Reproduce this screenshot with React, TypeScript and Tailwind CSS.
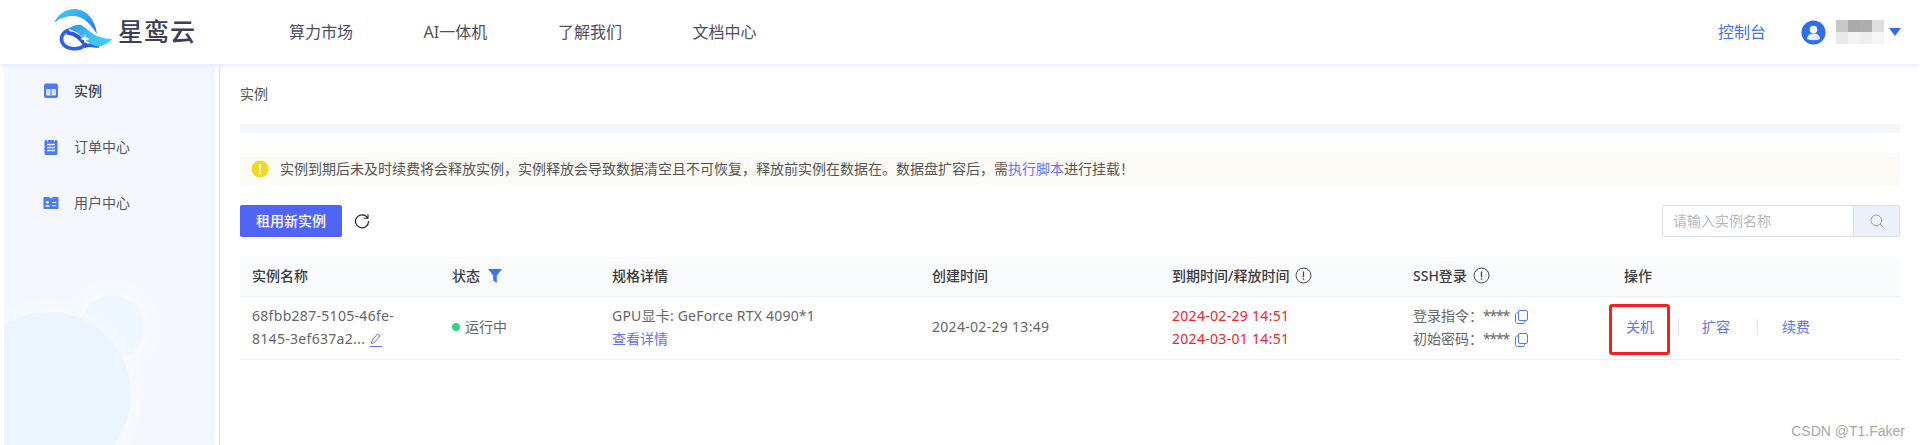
import { Fragment } from "react"
import { Search } from "lucide-react"

const navItems = ["算力市场", "AI一体机", "了解我们", "文档中心"]

function Logo() {
  return (
    <svg width="62" height="50" viewBox="0 0 62 50" className="mb-[2px] mr-[6px] shrink-0">
      <defs>
        <linearGradient id="top" x1="0" y1="0" x2="1" y2="1">
          <stop offset="0" stopColor="#3fd0f8" />
          <stop offset="0.6" stopColor="#2f9df2" />
          <stop offset="1" stopColor="#2468ea" />
        </linearGradient>
        <linearGradient id="wave" x1="0" y1="0" x2="1" y2="0.4">
          <stop offset="0" stopColor="#2f8cf2" />
          <stop offset="0.5" stopColor="#3fb8f6" />
          <stop offset="1" stopColor="#3ccdf7" />
        </linearGradient>
      </defs>
      <path d="M4 17C8 8 16 3 24 3C36 3 45 13 47 28C43 22 40 18 36 15C30 9 16 7 4 17Z" fill="url(#top)" />
      <path d="M19 24C13 26 10 31 12 36C15 43 27 45 34 40C38 38 42 40 49 40" fill="none" stroke="#2c60ee" strokeWidth="3.500" />
      <path d="M17 27C25 26 31 32 37 41" fill="none" stroke="#2a50e6" strokeWidth="4" />
      <path d="M18 23C22 20 27 18 31 19C36 21 40 27 47 30C52 32 57 33 62 33C58 38 52 41 46 40C41 39 37 35 33 32C29 27 23 24 18 23Z" fill="url(#wave)" />
      <path d="M35 28L36.200 31.500L40 33L36.200 34L35 38L33.800 34L30 33L33.800 31.500Z" fill="#ffffff" />
    </svg>
  )
}

function SideIcon({ kind }: { kind: string }) {
  if (kind === "instance") {
    return (
      <svg width="16" height="16" viewBox="0 0 16 16">
        <rect x="1" y="0.500" width="14" height="14.500" rx="2" fill="#4b7bf5" />
        <rect x="3" y="6" width="10" height="6.500" rx="1" fill="#d5e1fe" />
        <path d="M8 6V12.500" stroke="#4b7bf5" />
      </svg>
    )
  }
  if (kind === "order") {
    return (
      <svg width="16" height="16" viewBox="0 0 16 16">
        <rect x="1.500" y="1" width="13" height="15" rx="1.500" fill="#4b7bf5" />
        <path d="M4.500 0V2.500M11.500 0V2.500" stroke="#ffffff" />
        <path d="M4 5.500H12M4 8.500H12M4 11.500H12" stroke="#e4ebff" strokeWidth="1.300" />
      </svg>
    )
  }
  return (
    <svg width="17" height="14" viewBox="0 0 17 14">
      <path d="M0.500 1.500C0.500 0.900 1 0.500 1.500 0.500H6.500L7.500 2H9.500L10.500 0.500H15.500C16 0.500 16.500 0.900 16.500 1.500V12.500C16.500 13.100 16 13.500 15.500 13.500H1.500C1 13.500 0.500 13.100 0.500 12.500Z" fill="#4b7bf5" />
      <circle cx="4.800" cy="6.300" r="1.500" fill="#ffffff" />
      <path d="M2.300 11C2.500 9 7 9 7.300 11Z" fill="#ffffff" />
      <path d="M9.500 6.500H14M9.500 9.800H14" stroke="#ffffff" />
    </svg>
  )
}

function Info() {
  return (
    <svg width="17" height="17" viewBox="0 0 17 17" fill="none" stroke="#444" className="ml-[6px]">
      <circle cx="8.500" cy="8.500" r="7.500" />
      <path d="M8.500 4.500V10M8.500 11.300V12.800" strokeWidth="1.300" />
    </svg>
  )
}

function Copy() {
  return (
    <svg width="13" height="14" viewBox="0 0 13 14" fill="none" stroke="#4b7bf5" className="ml-[6px] inline-block">
      <rect x="3.500" y="0.500" width="9" height="10" rx="1.500" />
      <path d="M3.500 3H2C1.200 3 0.500 3.700 0.500 4.500V11.500C0.500 12.600 1.400 13.500 2.500 13.500H8C9 13.500 9.500 12.800 9.500 10.500" />
    </svg>
  )
}

function Divider() {
  return <span className="h-[16px] w-px bg-[#dfe2ea]" />
}

export default function App() {
  return (
    <div className="flex h-[445px] flex-col overflow-hidden bg-white font-['Noto_Sans','Noto_Sans_CJK_SC',sans-serif] text-sm">
      <header className="relative z-10 flex h-16 shrink-0 items-center bg-white pl-[50px] pr-[19px] shadow-[0_2px_5px_#e6e9fc]">
        <Logo />
        <span className="w-[171px] text-[25px] font-medium tracking-[1px] text-[#3b3e56]">星鸾云</span>
        <nav className="flex text-base text-[#4d4f5c]">
          {navItems.map((item) => (
            <a key={item} className="w-[134.500px]">
              {item}
            </a>
          ))}
        </nav>
        <a className="ml-auto text-base text-[#3a74f2]">控制台</a>
        <svg width="25" height="25" viewBox="0 0 25 25" className="ml-[35px]">
          <circle cx="12.500" cy="12.500" r="12" fill="#2e6ff2" />
          <circle cx="12.500" cy="9.500" r="3.800" fill="#ffffff" />
          <path d="M5.800 19C6.500 14.500 9.500 13.500 12.500 13.500C15.500 13.500 18.500 14.500 19.200 19C15 20.800 10 20.800 5.800 19Z" fill="#e4ecfd" />
        </svg>
        <div className="ml-[10px] grid grid-cols-[repeat(4,12px)] grid-rows-[repeat(2,12px)]">
          <span className="bg-[#c9c8c8]" />
          <span className="bg-[#aaaaaa]" />
          <span className="bg-[#aeaeae]" />
          <span className="bg-[#dedede]" />
          <span className="bg-[#e9e9e9]" />
          <span className="bg-[#f3f3f3]" />
          <span className="bg-[#eeeeee]" />
          <span className="bg-[#f6f6f6]" />
        </div>
        <svg width="12" height="8" viewBox="0 0 12 8" className="ml-[5px]">
          <path d="M0 0H12L6 8Z" fill="#2e6ff2" />
        </svg>
      </header>

      <div className="flex flex-1">
        <div className="flex w-[220px] shrink-0 border-r border-[#dcdde0] pl-1 pr-[3px]">
          <aside className="relative w-[208px] overflow-hidden bg-[#f4f8fe] shadow-[2px_0_3px_#e9effb]">
            <div className="absolute left-[76px] top-[232px] h-[64px] w-[64px] rounded-full bg-[#eef6fe] shadow-[0_0_30px_#fafcff]" />
            <div className="absolute left-[-37px] top-[248px] h-[164px] w-[164px] rounded-full bg-[#ecf5fe] shadow-[0_0_20px_#f9fbff]" />
            <div className="relative">
              {[
                ["instance", "实例"],
                ["order", "订单中心"],
                ["user", "用户中心"],
              ].map(([kind, label], i) => (
                <div key={kind} className="flex h-14 items-center pb-[2px]">
                  <span className="ml-[39px] flex w-[16px] justify-center">
                    <SideIcon kind={kind} />
                  </span>
                  <span className={i === 0 ? "ml-[15px] font-medium text-[#40424f]" : "ml-[15px] text-[#55575f]"}>{label}</span>
                </div>
              ))}
            </div>
          </aside>
        </div>

        <main className="min-w-0 flex-1 px-5 pt-5 text-[#666]">
          <div className="h-5 text-[#555]">实例</div>
          <div className="mt-5 h-[9px] bg-[#f4f6fb]" />

          <div className="mt-5 flex h-8 items-center bg-[#fcfaf4] pl-[11px] text-[#555]">
            <svg width="18" height="18" viewBox="0 0 18 18" className="mr-[11px] shrink-0">
              <circle cx="9" cy="9" r="8.500" fill="#eedb20" />
              <path d="M9 4V10.500M9 12.300V14" stroke="#ffffff" strokeWidth="2" />
            </svg>
            {"实例到期后未及时续费将会释放实例\uFF0C实例释放会导致数据清空且不可恢复\uFF0C释放前实例在数据在。数据盘扩容后\uFF0C需"}
            <a className="text-[#5d74f5]">执行脚本</a>
            {"进行挂载\uFF01"}
          </div>

          <div className="mt-5 flex h-8 items-center">
            <button className="h-8 w-[102px] rounded-[2px] bg-[#5064f5] font-medium text-white">租用新实例</button>
            <svg width="16" height="16" viewBox="0 0 16 16" fill="none" stroke="#222" strokeWidth="1.200" className="ml-3">
              <path d="M13.600 5A6.500 6.500 0 1 0 14.500 8" />
              <path d="M14 1.200V5.200H10" strokeWidth="1.100" />
            </svg>
            <div className="ml-auto flex h-8 w-[238px] rounded-[2px] border border-[#dcdfe9]">
              <span className="flex flex-1 items-center pl-[10px] text-[#b5b7bd]">请输入实例名称</span>
              <span className="flex w-[46px] items-center justify-center border-l border-[#dcdfe9] bg-[#ecf0fb]">
                <Search size={16} strokeWidth={1} color="#777" />
              </span>
            </div>
          </div>

          <div className="mt-5 grid grid-cols-[200px_160px_320px_240px_241px_211px_1fr]">
            {[
              <Fragment key="a">实例名称</Fragment>,
              <Fragment key="b">
                状态
                <svg width="14" height="14" viewBox="0 0 14 14" className="ml-2">
                  <path d="M0 0H14L8.800 6.500V14L5.200 11.500V6.500Z" fill="#3a74f2" />
                </svg>
              </Fragment>,
              <Fragment key="c">规格详情</Fragment>,
              <Fragment key="d">创建时间</Fragment>,
              <Fragment key="e">
                到期时间/释放时间
                <Info />
              </Fragment>,
              <Fragment key="f">
                SSH登录
                <Info />
              </Fragment>,
              <Fragment key="g">操作</Fragment>,
            ].map((head, i) => (
              <div key={i} className="flex h-10 items-center border-b border-[#eceef4] bg-[#fafbfd] pb-[2px] pl-3 font-medium text-[#3c3c3c]">
                {head}
              </div>
            ))}

            <div className="flex h-[63px] items-center border-b border-[#eceef4] pb-[3px] pl-3 leading-[23px] tracking-[0.3px]">
              <div>
                68fbb287-5105-46fe-
                <br />
                8145-3ef637a2...
                <svg width="14" height="14" viewBox="0 0 14 14" fill="none" stroke="#5d74f5" className="ml-[4px] inline-block">
                  <path d="M2.500 10.500L3 7.500L8.500 1L11 3L5.500 9.500Z" />
                  <path d="M1 13.500H13" />
                </svg>
              </div>
            </div>
            <div className="flex h-[63px] items-center border-b border-[#eceef4] pb-[3px] pl-3">
              <span className="mr-[5px] h-2 w-2 rounded-full bg-[#2cd67c]" />
              运行中
            </div>
            <div className="flex h-[63px] items-center border-b border-[#eceef4] pb-[3px] pl-3 leading-[23px] tracking-[0.2px]">
              <div>
                GPU显卡: GeForce RTX 4090*1
                <div className="tracking-normal text-[#5d74f5]">查看详情</div>
              </div>
            </div>
            <div className="flex h-[63px] items-center border-b border-[#eceef4] pb-[3px] pl-3 tracking-[0.3px]">2024-02-29 13:49</div>
            <div className="flex h-[63px] items-center border-b border-[#eceef4] pb-[3px] pl-3 leading-[23px] tracking-[0.3px] text-[#f5222d]">
              <div>
                2024-02-29 14:51
                <br />
                2024-03-01 14:51
              </div>
            </div>
            <div className="flex h-[63px] items-center border-b border-[#eceef4] pb-[3px] pl-3 leading-[23px]">
              <div>
                <div>
                  {"登录指令\uFF1A"}
                  <span className="tracking-[-1.200px]">****</span>
                  <Copy />
                </div>
                <div>
                  {"初始密码\uFF1A"}
                  <span className="tracking-[-1.200px]">****</span>
                  <Copy />
                </div>
              </div>
            </div>
            <div className="relative flex h-[63px] items-center gap-6 border-b border-[#eceef4] pb-[3px] pl-[14px] text-[#5d74f5]">
              <a>关机</a>
              <Divider />
              <a className="-ml-px mr-[3px]">扩容</a>
              <Divider />
              <a>续费</a>
              <span className="absolute left-[-3px] top-[7px] h-[51px] w-[61px] rounded-[3px] border-[3px] border-[#f5201c]" />
            </div>
          </div>
        </main>
      </div>

      <span className="absolute right-[15px] top-[421px] font-['Liberation_Sans',sans-serif] text-sm text-[#a8a8a8]">CSDN @T1.Faker</span>
    </div>
  )
}
